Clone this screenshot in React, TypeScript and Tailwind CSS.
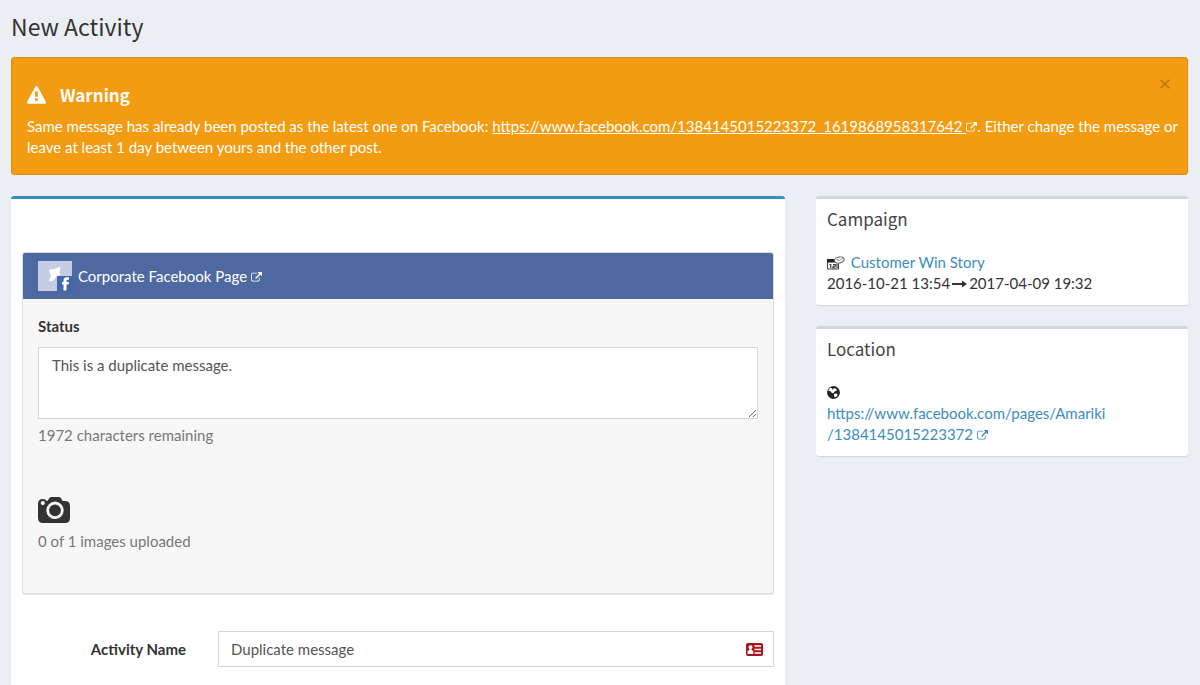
import React from "react";

function Fa({ d, className }: { d: string; className: string }) {
  return (
    <svg viewBox="0 0 1792 1792" fill="currentColor" aria-hidden="true" className={className}>
      <path d={d} />
    </svg>
  );
}

const EXTERNAL =
  "M1408 928v320q0 119-84.5 203.5t-203.5 84.5h-832q-119 0-203.5-84.5t-84.5-203.5v-832q0-119 84.5-203.5t203.5-84.5h704q14 0 23 9t9 23v64q0 14-9 23t-23 9h-704q-66 0-113 47t-47 113v832q0 66 47 113t113 47h832q66 0 113-47t47-113v-320q0-14 9-23t23-9h64q14 0 23 9t9 23zm384-864v512q0 26-19 45t-45 19-45-19l-176-176-652 652q-10 10-23 10t-23-10l-114-114q-10-10-10-23t10-23l652-652-176-176q-19-19-19-45t19-45 45-19h512q26 0 45 19t19 45z";
const WARNING =
  "M1024 1375v-190q0-14-9.5-23.5t-22.5-9.5h-192q-13 0-22.5 9.5t-9.5 23.5v190q0 14 9.5 23.5t22.5 9.5h192q13 0 22.5-9.5t9.5-23.5zm-2-374l18-459q0-12-10-19-13-11-24-11h-220q-11 0-24 11-10 7-10 21l17 457q0 10 10 16.5t24 6.5h185q14 0 23.5-6.5t10.5-16.5zm-14-934l768 1408q35 63-2 126-17 29-46.5 46t-63.5 17h-1536q-34 0-63.5-17t-46.5-46q-37-63-2-126l768-1408q17-31 47-49t65-18 65 18 47 49z";

function External() {
  return <Fa d={EXTERNAL} className="inline-block size-[11px] align-[-1px]" />;
}

function CameraIcon() {
  return (
    <svg viewBox="0 0 32 26" className="h-[26px] w-8 text-[#333]" aria-hidden="true">
      <path
        fill="currentColor"
        fillRule="evenodd"
        d="M10 3.500Q11 0 13.500 0h7Q23 0 24 3l.5 1H27q5 0 5 5v12q0 5-5 5H5q-5 0-5-5V7Q0 2 5 2q2.500 0 3.500 2ZM4.800 4a2.100 2.100 0 1 0 0 4.200 2.100 2.100 0 0 0 0-4.200Z"
      />
      <circle cx="17" cy="13.300" r="7.300" fill="none" stroke="#f7f7f7" strokeWidth="2.800" />
    </svg>
  );
}

function CampaignIcon() {
  return (
    <svg viewBox="0 0 18 14" className="inline-block h-[14px] w-[18px] align-[-2px] text-[#222]" aria-hidden="true">
      <path d="M.5 3.500h11v9.500H.5z" fill="#fff" stroke="#444" />
      <path d="M0 3h9l2.500 3.500H0z" fill="currentColor" />
      <path d="M2.500 8.500h1.300V12M6 8.500h2.300v1.700H6V12h2.500M10 8v4" fill="none" stroke="#333" strokeWidth="1.100" />
      <ellipse cx="12.300" cy="4" rx="4.900" ry="3" fill="#fff" stroke="#555" transform="rotate(-12 12.300 4)" />
      <path d="M9.500 3.500l3 1L16 2.500M10 7L8.500 9" fill="none" stroke="#777" strokeWidth=".8" />
    </svg>
  );
}

function GlobeIcon() {
  return (
    <svg viewBox="0 0 13 13" className="block size-[13px] text-[#222]" aria-hidden="true">
      <circle cx="6.500" cy="6.500" r="6.400" fill="currentColor" />
      <path
        fill="#fff"
        d="M1.800 3.200 3.500 1.800 5 2.300l.3 1.500 1.500-1.600 1.700.2 1.300 1-.6 1.500-1.200.3L6.500 7l-.8.300L4 6.200 3.200 4.800 1.500 5zM7 7.800l2.500-.3 1.300 1.200-1.300 1.800L7.800 11.500 7 9.500z"
      />
    </svg>
  );
}

function AddressCard() {
  return (
    <svg viewBox="0 0 17 13" className="h-[13px] w-[17px]" aria-hidden="true">
      <rect width="17" height="13" rx="2" fill="#a9151b" />
      <circle cx="4.500" cy="4.200" r="1.900" fill="#fff" />
      <path d="M3.500 5h2v2l1.700 1v3H1.600V8l1.900-1z" fill="#fff" />
      <path d="M8.500 3h6.500M8.500 6.500h6.500M8.500 10h6.500" stroke="#fff" strokeWidth="1.300" />
    </svg>
  );
}

function PageLogo() {
  return (
    <svg viewBox="0 0 36 30" className="h-[30px] w-9" aria-hidden="true">
      <path d="M0 0h34v30H0z" fill="#c5cde4" />
      <path d="M11 8.500l5.500-.5L22.500 5.500 21.500 12l.8 2-4.300 2-3.500 4.300-3.500-.8 1.800-4.500z" fill="#fff" />
      <path d="M19 15h17v15H19z" fill="#4467ac" />
      <path d="M25.500 29.500v-6H24V21h1.500v-1.500q0-3.300 3.200-3.300H31v2.500h-1.300q-1.200 0-1.200 1.100V21H31l-.4 2.500h-2.100v6z" fill="#fff" />
    </svg>
  );
}

function SideBox({ title, children }: { title: string; children: React.ReactNode }) {
  return (
    <section className="rounded-[3px] border-t-[3px] border-[#d2d6de] bg-white px-[11px] pb-[11px] shadow-[0_1px_1px_rgba(0,0,0,0.1)]">
      <h2 className="pt-2 font-['Noto_Sans_CJK_SC',sans-serif] text-[17px] leading-6 text-[#444]">{title}</h2>
      <div className="pt-[21px] leading-[21px]">{children}</div>
    </section>
  );
}

export default function App() {
  return (
    <div className="min-h-screen bg-[#ebeff4] pr-3 pl-[11px] font-[Lato,sans-serif] text-[15px] leading-[21px] text-[#333]">
      <h1 className="pt-[9px] font-['Noto_Sans_CJK_SC',sans-serif] text-[23px] leading-[34px] text-[#333]">New Activity</h1>

      <div role="alert" className="mt-[14px] rounded-[3px] border border-[#e08e0b] bg-[#f39c12] pr-1 pb-4 pl-[15px] text-white">
        <div className="flex items-start justify-between pt-[19px] pr-[11px]">
          <h2 className="flex items-center gap-[14px] pt-[6px] font-['Noto_Sans_CJK_SC',sans-serif] text-[17px] leading-6 font-bold">
            <Fa d={WARNING} className="size-[19px]" />
            Warning
          </h2>
          <button type="button" aria-label="Close" className="p-[2px] text-[#b9770f]">
            <svg viewBox="0 0 10 10" className="size-[10px]" aria-hidden="true">
              <path d="M.7.7l8.600 8.600M9.300.7L.7 9.300" stroke="currentColor" strokeWidth="1.500" />
            </svg>
          </button>
        </div>
        <p className="mt-[9px]">
          Same message has already been posted as the latest one on Facebook:{" "}
          <a href="https://www.facebook.com/1384145015223372_1619868958317642" className="underline">
            https://www.facebook.com/1384145015223372_1619868958317642 <External />
          </a>
          . Either change the message or leave at least 1 day between yours and the other post.
        </p>
      </div>

      <div className="mt-[21px] grid grid-cols-[774fr_372fr] items-start gap-[31px]">
        <main className="rounded-t-[3px] border-t-[3px] border-[#3c8dbc] bg-white px-[11px] pt-[53px] pb-8 shadow-[0_1px_1px_rgba(0,0,0,0.1)]">
          <section className="overflow-hidden rounded-[3px] border border-[#dadde0] bg-[#f7f7f7] shadow-[0_1px_1px_rgba(0,0,0,0.1)]">
            <header className="flex items-center gap-1 bg-[#4e69a2] px-[15px] py-2 text-white">
              <PageLogo />
              <a href="#page">
                Corporate Facebook Page <External />
              </a>
            </header>
            <div className="px-[15px] pt-[17px] pb-[41px]">
              <label htmlFor="status" className="block font-bold">
                Status
              </label>
              <textarea
                id="status"
                defaultValue="This is a duplicate message."
                className="mt-[10px] block h-[72px] w-full border border-[#d2d6de] bg-white px-[13px] py-[7px] text-[#555]"
              />
              <p className="mt-[6px] text-[#777]">1972 characters remaining</p>
              <button type="button" aria-label="Add image" className="mt-[51px] block">
                <CameraIcon />
              </button>
              <p className="mt-2 text-[#777]">0 of 1 images uploaded</p>
            </div>
          </section>

          <div className="mt-[37px] flex items-center">
            <label htmlFor="activity-name" className="w-[164px] shrink-0 text-right font-bold">
              Activity Name
            </label>
            <div className="relative ml-8 grow">
              <input
                id="activity-name"
                type="text"
                defaultValue="Duplicate message"
                className="h-9 w-full border border-[#d2d6de] bg-white px-3 text-[#555]"
              />
              <span className="pointer-events-none absolute inset-y-0 right-[11px] flex items-center">
                <AddressCard />
              </span>
            </div>
          </div>
        </main>

        <aside className="flex flex-col gap-[21px]">
          <SideBox title="Campaign">
            <CampaignIcon />{" "}
            <a href="#campaign" className="ml-[2px] text-[#3c8dbc]">
              Customer Win Story
            </a>
            <div>
              2016-10-21 13:54
              <svg viewBox="0 0 15 8" className="mx-[2px] inline-block h-2 w-[15px] align-[1px]" aria-hidden="true">
                <path d="M0 3h10V.5L15 4l-5 3.500V5H0z" fill="currentColor" />
              </svg>
              2017-04-09 19:32
            </div>
          </SideBox>
          <SideBox title="Location">
            <div className="flex h-[21px] items-center">
              <GlobeIcon />
            </div>
            <a href="https://www.facebook.com/pages/Amariki/1384145015223372" className="text-[#3c8dbc]">
              https://www.facebook.com/pages/Amariki
              <br />
              /1384145015223372 <External />
            </a>
          </SideBox>
        </aside>
      </div>
    </div>
  );
}
